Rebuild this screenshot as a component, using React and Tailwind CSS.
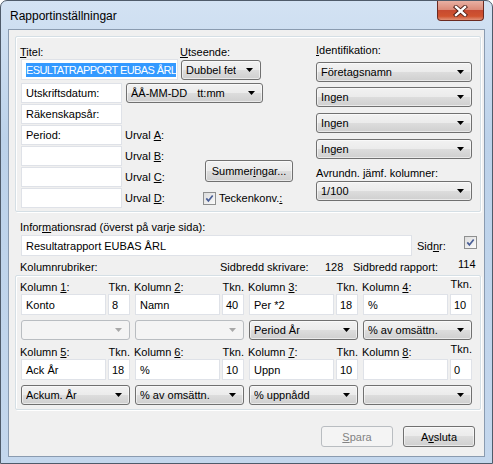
import React from "react";

const U = ({ children }) => <span className="underline underline-offset-[1px]">{children}</span>;

function Arrow({ disabled }) {
  return (
    <svg width="7" height="4" viewBox="0 0 7 4" className="shrink-0">
      <path d="M0 0H7L3.5 4Z" fill={disabled ? "#a8a8a8" : "#000"} />
    </svg>
  );
}

function Combo({ className = "", children, disabled }) {
  return (
    <div
      className={`box-border flex h-[20px] items-center justify-between rounded-[3px] border pl-[4px] pr-[7px] ${
        disabled
          ? "border-[#b9bdc1] bg-[#f4f4f4]"
          : "border-[#707070] bg-[image:linear-gradient(to_bottom,#f2f2f2_0%,#ebebeb_50%,#dddddd_50%,#cfcfcf_100%)] shadow-[inset_0_0_0_1px_rgba(255,255,255,0.55)]"
      } ${className}`}
    >
      <span className="truncate whitespace-pre">{children}</span>
      <Arrow disabled={disabled} />
    </div>
  );
}

function Box({ className = "", children }) {
  return (
    <div className={`box-border flex items-center overflow-hidden whitespace-nowrap border border-[#dfe2e8] bg-white ${className}`}>
      {children}
    </div>
  );
}

function Btn({ className = "", children, disabled }) {
  return (
    <div
      className={`box-border flex items-center justify-center rounded-[3px] border ${
        disabled
          ? "border-[#b9bdc1] bg-[#f4f4f4] text-[#838383]"
          : "border-[#707070] bg-[image:linear-gradient(to_bottom,#f2f2f2_0%,#ebebeb_50%,#dddddd_50%,#cfcfcf_100%)] shadow-[inset_0_0_0_1px_rgba(255,255,255,0.55)]"
      } ${className}`}
    >
      {children}
    </div>
  );
}

function Check({ className = "" }) {
  return (
    <div
      className={`box-border flex h-[13px] w-[13px] shrink-0 items-center justify-center border border-[#8e8f8f] bg-[image:linear-gradient(135deg,#dcdcdc,#fbfbfb)] ${className}`}
    >
      <svg width="9" height="9" viewBox="0 0 9 9">
        <path d="M1.3 4.4L3.4 6.9L7.7 1.4" fill="none" stroke="#4a5f97" strokeWidth="1.7" />
      </svg>
    </div>
  );
}

function Column({ n, name, tkn, combo, disabled, raised }) {
  return (
    <div className="flex w-[109px] flex-col">
      <div className="-ml-px flex h-[13px] items-start justify-between leading-[13px]">
        <span>
          Kolumn <U>{n}</U>:
        </span>
        <span className={raised ? "-mt-[3px]" : ""}>Tkn.</span>
      </div>
      <div className="flex gap-[2px]">
        <Box className="h-[21px] w-[85px] pl-[4px]">{name}</Box>
        <Box className="h-[21px] w-[22px] pl-[3px]">{tkn}</Box>
      </div>
      <Combo className="mt-[5px] w-[109px]" disabled={disabled}>
        {combo}
      </Combo>
    </div>
  );
}

const columns = [
  { n: "1", name: "Konto", tkn: "8", combo: "", disabled: true },
  { n: "2", name: "Namn", tkn: "40", combo: "", disabled: true },
  { n: "3", name: "Per *2", tkn: "18", combo: "Period År" },
  { n: "4", name: "%", tkn: "10", combo: "% av omsättn.", raised: true },
  { n: "5", name: "Ack År", tkn: "18", combo: "Ackum. År" },
  { n: "6", name: "%", tkn: "10", combo: "% av omsättn." },
  { n: "7", name: "Uppn", tkn: "10", combo: "% uppnådd" },
  { n: "8", name: "", tkn: "0", combo: "", raised: true },
];

export default function App() {
  return (
    <div className="h-[464px] w-[493px] font-['Liberation_Sans',Arial,sans-serif] text-[11px] leading-[14px] text-black">
      <div className="box-border h-[464px] w-[493px] rounded-t-[7px] border border-[#4f5b6a] bg-[image:linear-gradient(to_bottom,#d3e2f3,#bcd2ea_30%,#c4d7ed)]">
        {/* Title bar */}
        <div className="flex h-[28px] items-start justify-between">
          <div className="pl-[9px] pt-[8px] text-[12px] leading-[14px]">Rapportinställningar</div>
          <div className="mr-[8px] box-border flex h-[20px] w-[47px] items-center justify-center rounded-b-[4px] border border-t-0 border-[#6b2a21] bg-[image:linear-gradient(to_bottom,#e9b0a3_0%,#dc8b79_45%,#c74a30_50%,#d0532f_80%,#e09177_100%)]">
            <svg width="15" height="12" viewBox="0 0 15 12">
              <path d="M3 2L12 10M12 2L3 10" stroke="#4a1a12" strokeWidth="4.2" strokeLinecap="square" />
              <path d="M3 2L12 10M12 2L3 10" stroke="#fff" strokeWidth="2.4" strokeLinecap="square" />
            </svg>
          </div>
        </div>

        {/* Client */}
        <div className="ml-[7px] box-border h-[428px] w-[477px] border border-[#8a9bb0] bg-[#f0f0f0]">
          {/* Group 1 */}
          <div className="ml-[6px] mt-[6px] box-border flex h-[176px] w-[466px] rounded-[2px] border border-[#d5dfe5] pl-[5px] shadow-[inset_1px_1px_0_#fff,1px_1px_0_#fff]">
            <div className="flex w-[295px] flex-col">
              <div className="-ml-px mt-[8px] flex h-[14px]">
                <span className="w-[160px]">
                  <U>T</U>itel:
                </span>
                <span>
                  <U>U</U>tseende:
                </span>
              </div>
              <div className="flex items-start">
                <Box className="h-[21px] w-[157px] pl-[4px]">
                  <span className="bg-[#3399ff] tracking-[-0.6px] text-white">ESULTATRAPPORT EUBAS ÅRL</span>
                </Box>
                <Combo className="ml-[3px] mt-px w-[80px]">Dubbel fet</Combo>
              </div>
              <div className="mt-[3px] flex">
                <Box className="h-[20px] w-[101px] pl-[4px]">Utskriftsdatum:</Box>
                <Combo className="ml-[4px] w-[137px]">
                  ÅÅ-MM-DD<span className="ml-[10px]">tt:mm</span>
                </Combo>
              </div>
              <div className="mt-px flex">
                <div className="flex w-[101px] flex-col gap-px">
                  <Box className="h-[20px] pl-[4px]">Räkenskapsår:</Box>
                  <Box className="h-[20px] pl-[4px]">Period:</Box>
                  <Box className="h-[20px]" />
                  <Box className="h-[20px]" />
                  <Box className="h-[20px]" />
                </div>
                <div className="ml-[3px] flex w-[80px] flex-col gap-px">
                  <div className="h-[20px]" />
                  {["A", "B", "C", "D"].map((l) => (
                    <div key={l} className="flex h-[20px] items-center">
                      Urval&nbsp;<U>{l}</U>:
                    </div>
                  ))}
                </div>
                <div className="flex flex-col">
                  <Btn className="mt-[56px] h-[22px] w-[88px]">
                    Summer<U>i</U>ngar...
                  </Btn>
                  <div className="-ml-[2px] mt-[9px] flex h-[14px] items-center gap-[3px]">
                    <Check />
                    <span>
                      Teckenkonv.<U>:</U>
                    </span>
                  </div>
                </div>
              </div>
            </div>

            <div className="flex w-[156px] flex-col">
              <div className="mt-[6px] h-[14px]">
                <U>I</U>dentifikation:
              </div>
              <Combo className="mt-[5px]">Företagsnamn</Combo>
              <Combo className="mt-[5px]">Ingen</Combo>
              <Combo className="mt-[6px]">Ingen</Combo>
              <Combo className="mt-[6px]">Ingen</Combo>
              <div className="mt-[7px] h-[14px]">Avrundn. jämf. kolumner:</div>
              <Combo className="mt-px">1/100</Combo>
            </div>
          </div>

          {/* Informationsrad */}
          <div className="ml-[11px] mt-[8px] h-[14px]">
            Infor<U>m</U>ationsrad (överst på varje sida):
          </div>
          <div className="ml-[12px] mt-px flex items-center">
            <Box className="h-[21px] w-[391px] pl-[4px]">Resultatrapport EUBAS ÅRL</Box>
            <span className="ml-[5px] w-[47px]">
              Sid<U>n</U>r:
            </span>
            <Check className="-mt-[6px]" />
          </div>
          <div className="ml-[11px] mt-[4px] flex h-[14px] items-start">
            <span className="w-[200px]">Kolumnrubriker:</span>
            <span className="w-[105px]">Sidbredd skrivare:</span>
            <span className="w-[28px]">128</span>
            <span className="w-[105px]">Sidbredd rapport:</span>
            <span className="-mt-[3px]">114</span>
          </div>

          {/* Group 2 */}
          <div className="ml-[6px] mt-px box-border h-[135px] w-[466px] rounded-[2px] border border-[#d5dfe5] pl-[5px] pt-[5px] shadow-[inset_1px_1px_0_#fff,1px_1px_0_#fff]">
            <div className="grid grid-cols-[repeat(4,109px)] gap-x-[5px] gap-y-[6px]">
              {columns.map((c) => (
                <Column key={c.n} {...c} />
              ))}
            </div>
          </div>

          {/* Buttons */}
          <div className="mt-[16px] flex justify-end gap-[10px] pr-[9px]">
            <Btn disabled className="h-[21px] w-[72px]">
              <U>S</U>para
            </Btn>
            <Btn className="h-[21px] w-[72px]">
              A<U>v</U>sluta
            </Btn>
          </div>
        </div>
      </div>
    </div>
  );
}
